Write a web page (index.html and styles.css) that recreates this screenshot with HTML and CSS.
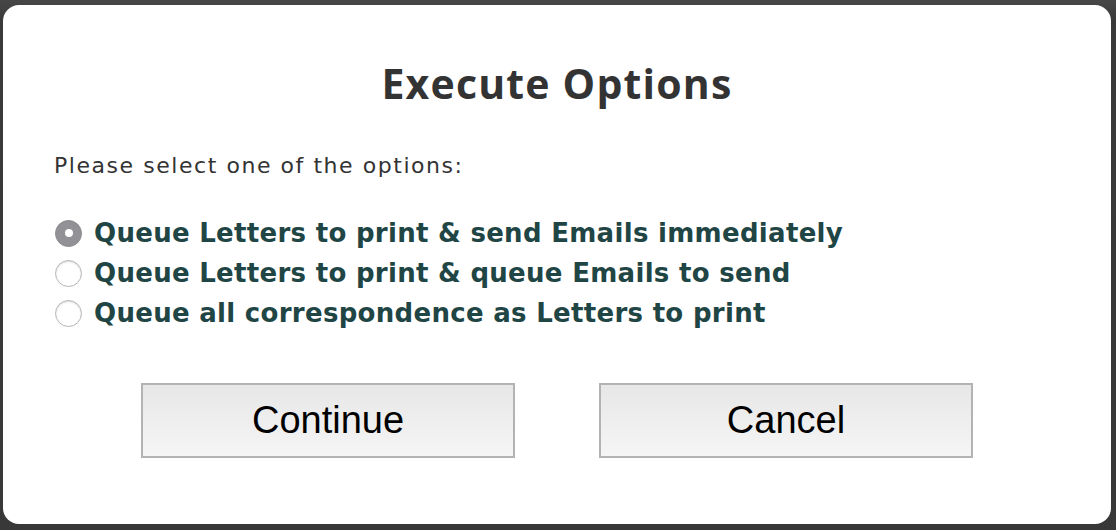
FILE: index.html
```html
<!DOCTYPE html>
<html>
<head>
<meta charset="utf-8">
<link rel="stylesheet" href="styles.css">
</head>
<body>
<div class="dialog">
  <h1 class="title">Execute Options</h1>
  <p class="prompt">Please select one of the options:</p>
  <div class="options">
    <label class="option"><span class="radio checked"></span><span>Queue Letters to print &amp; send Emails immediately</span></label>
    <label class="option"><span class="radio"></span><span>Queue Letters to print &amp; queue Emails to send</span></label>
    <label class="option"><span class="radio"></span><span>Queue all correspondence as Letters to print</span></label>
  </div>
  <div class="buttons">
    <button class="btn">Continue</button>
    <button class="btn">Cancel</button>
  </div>
</div>
</body>
</html>
```
FILE: styles.css
```css
html, body {
  margin: 0;
  height: 100%;
}
body {
  background: linear-gradient(#474747, #3a3a3a 20px, #383838);
  padding: 5px 5px 6px 3px;
  box-sizing: border-box;
  height: 530px;
  overflow: hidden;
}
.dialog {
  background: #fff;
  border-radius: 16px;
  height: 519px;
  width: 1108px;
  box-sizing: border-box;
  padding: 0 0 0 51px;
  display: flex;
  flex-direction: column;
}
.title {
  margin: 52px 0 0 -51px;
  text-align: center;
  font-family: "Open Sans", sans-serif;
  font-weight: 700;
  font-size: 41px;
  letter-spacing: 1.2px;
  line-height: 52px;
  color: #333;
}
.prompt {
  margin: 42px 0 0 0;
  font-family: "DejaVu Sans", sans-serif;
  font-size: 22px;
  letter-spacing: 1.55px;
  line-height: 30px;
  color: #333;
}
.options {
  margin-top: 32px;
  display: flex;
  flex-direction: column;
}
.option {
  display: flex;
  align-items: center;
  gap: 12px;
  height: 40px;
  font-family: "DejaVu Sans", sans-serif;
  font-weight: bold;
  font-size: 26px;
  letter-spacing: 0.3px;
  color: #1f4545;
}
.radio {
  width: 25px;
  height: 25px;
  margin-left: 1px;
  border-radius: 50%;
  border: 1px solid #b5b5b5;
  box-shadow: inset 0 1px 2px rgba(0,0,0,0.15);
  background: #fff;
  flex: none;
  position: relative;
}
.radio.checked {
  background: #919196;
  border-color: #8a8a8f;
  box-shadow: none;
}
.radio.checked::after {
  content: "";
  position: absolute;
  width: 8px;
  height: 8px;
  border-radius: 50%;
  background: #fff;
  left: 8.5px;
  top: 8.5px;
}
.buttons {
  margin: 50px 0 0 -51px;
  display: flex;
  justify-content: center;
  gap: 84px;
}
.btn {
  width: 374px;
  height: 75px;
  border: 2px solid #b3b3b3;
  background: linear-gradient(#e7e7e7, #f5f5f5);
  font-family: "Liberation Sans", Arial, sans-serif;
  font-size: 38px;
  color: #000;
  padding: 0;
}
```
